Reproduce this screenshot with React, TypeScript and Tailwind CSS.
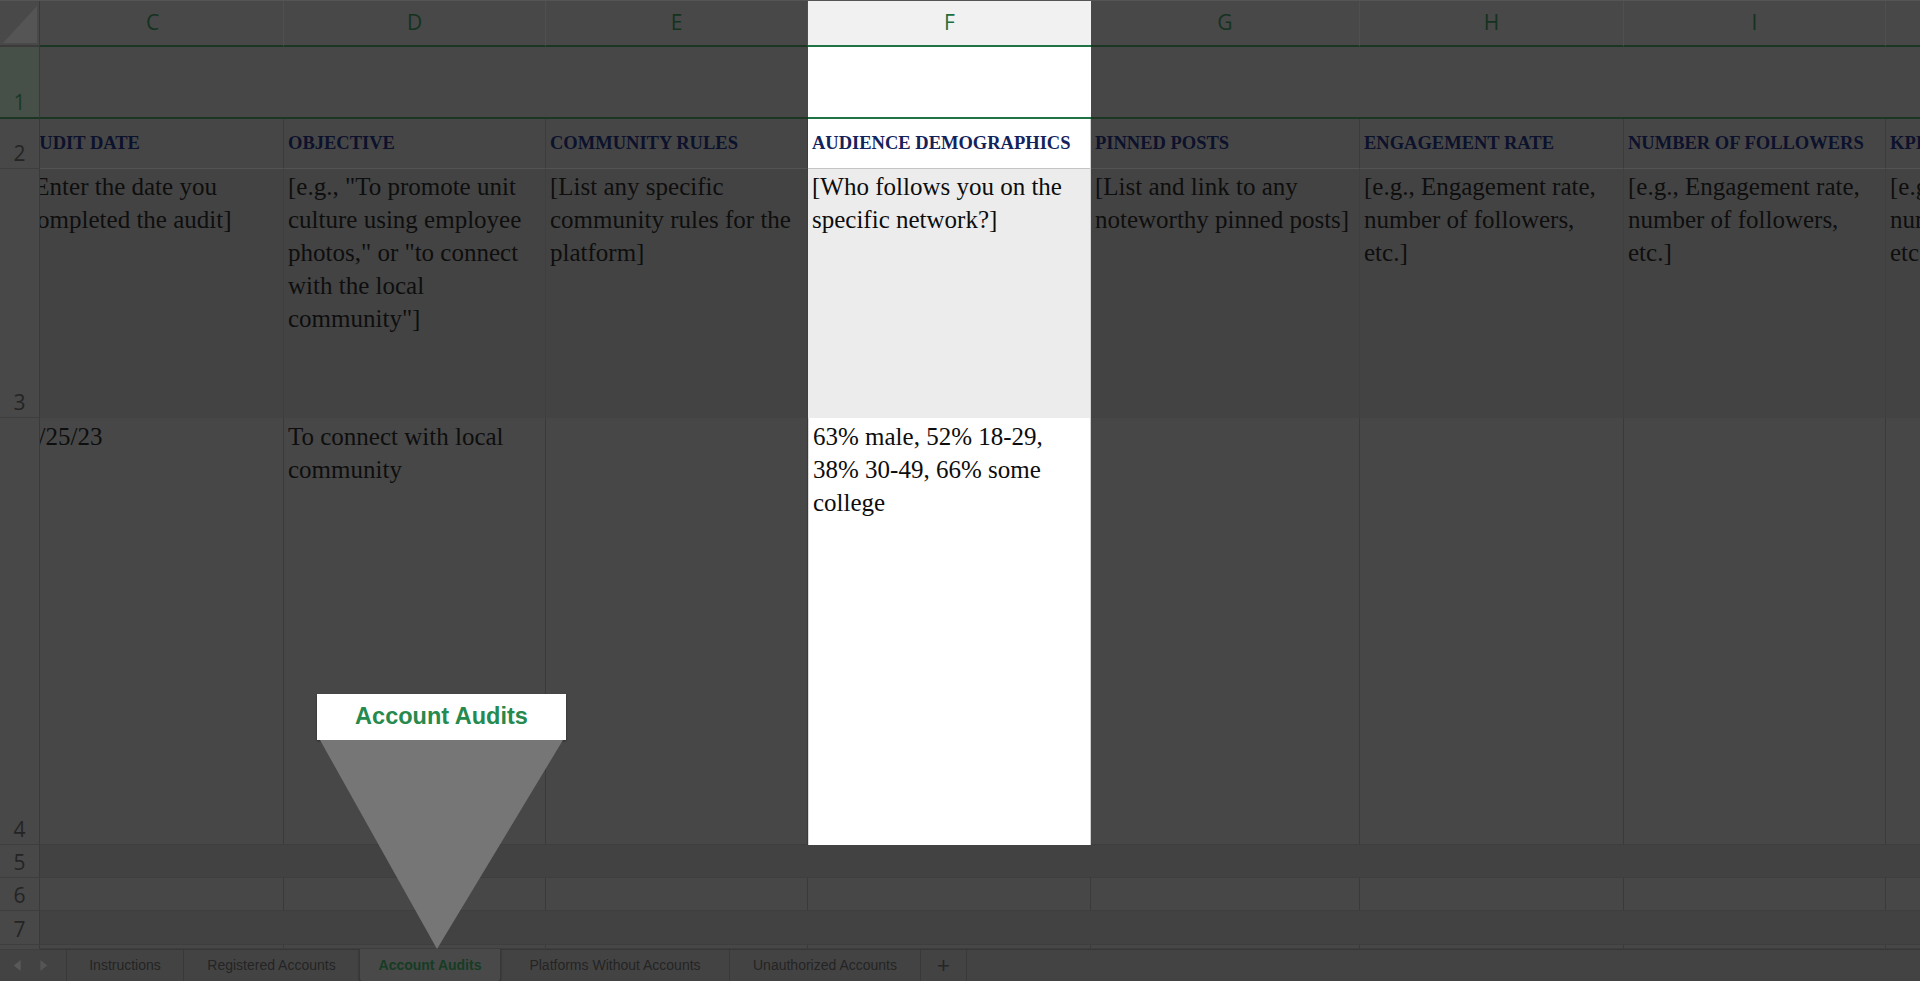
import React from 'react';

type Col = {
  id: string;
  w: string;
  head: string;
  note: string;
  entry: string;
  spot?: boolean;
};

const cols: Col[] = [
  { id: 'C', w: 'w-[262px]', head: 'AUDIT DATE', note: '[Enter the date you completed the audit]', entry: '4/25/23' },
  {
    id: 'D',
    w: 'w-[262px]',
    head: 'OBJECTIVE',
    note: '[e.g., "To promote unit culture using employee photos," or "to connect with the local community"]',
    entry: 'To connect with local community',
  },
  { id: 'E', w: 'w-[262px]', head: 'COMMUNITY RULES', note: '[List any specific community rules for the platform]', entry: '' },
  {
    id: 'F',
    w: 'w-[283px]',
    head: 'AUDIENCE DEMOGRAPHICS',
    note: '[Who follows you on the specific network?]',
    entry: '63% male, 52% 18-29, 38% 30-49, 66% some college',
    spot: true,
  },
  { id: 'G', w: 'w-[269px]', head: 'PINNED POSTS', note: '[List and link to any noteworthy pinned posts]', entry: '' },
  { id: 'H', w: 'w-[264px]', head: 'ENGAGEMENT RATE', note: '[e.g., Engagement rate, number of followers, etc.]', entry: '' },
  { id: 'I', w: 'w-[262px]', head: 'NUMBER OF FOLLOWERS', note: '[e.g., Engagement rate, number of followers, etc.]', entry: '' },
  { id: 'J', w: 'w-[262px]', head: 'KPIs', note: '[e.g., Engagement rate, number of followers, etc.]', entry: '' },
];

const serif = "font-['Liberation_Serif','Times_New_Roman',serif]";
const sans = "font-['Liberation_Sans',Arial,sans-serif]";
const ui = "font-['Open_Sans','Liberation_Sans',sans-serif]";

const RowHead: React.FC<{ n?: string; active?: boolean; className?: string }> = ({ n, active, className = '' }) => (
  <div
    className={`w-[40px] shrink-0 flex items-end justify-center pb-[4px] border-r border-[#3a3a3a] text-[21px] leading-none ${ui} ${
      active ? 'bg-[#465049] text-[#1b3a25]' : 'bg-[#484848] text-[#242424]'
    } ${className}`}
  >
    {n}
  </div>
);

// clipped strip of cells, column C is scrolled partly out of view
const Strip: React.FC<{ children: React.ReactNode }> = ({ children }) => (
  <div className="flex-1 overflow-hidden">
    <div className="flex h-full -ml-[18px]">{children}</div>
  </div>
);

const Band: React.FC<{ n: string; h: string; bg: string; lines?: boolean }> = ({ n, h, bg, lines }) => (
  <div className={`flex ${h}`}>
    <RowHead n={n} className="border-b border-b-[#3e3e3e]" />
    <Strip>
      {cols.map((c) => (
        <div
          key={c.id}
          className={`${c.w} shrink-0 ${bg} border-b border-b-[#3e3e3e] ${lines ? 'border-r border-r-[#3a3a3a]' : ''}`}
        />
      ))}
    </Strip>
  </div>
);

export default function App() {
  return (
    <div className="relative w-[1920px] h-[981px] overflow-hidden bg-[#444444]">
      {/* column letters */}
      <div className="flex h-[47px] border-t border-[#555555]">
        <div className="w-[40px] shrink-0 bg-[#494949] border-r border-[#3a3a3a] border-b-2 border-b-[#3b3b3b]">
          <svg width="40" height="44" viewBox="0 0 40 44">
            <polygon points="37,5 37,42 3,42" fill="#555555" />
          </svg>
        </div>
        <Strip>
          {cols.map((c) => (
            <div
              key={c.id}
              className={`${c.w} shrink-0 flex items-center justify-center border-b-2 text-[21px] ${ui} ${
                c.spot
                  ? 'bg-[#f1f1f1] text-[#1f6e3d] border-b-[#217346]'
                  : 'bg-[#484848] text-[#143220] border-b-[#1b3622] border-r border-r-[#4f4f4f]'
              }`}
            >
              {c.id}
            </div>
          ))}
        </Strip>
      </div>

      {/* row 1 */}
      <div className="flex h-[72px]">
        <RowHead n="1" active className="border-b-2 border-b-[#1b3622]" />
        <Strip>
          {cols.map((c) => (
            <div
              key={c.id}
              className={`${c.w} shrink-0 border-b-2 ${
                c.spot ? 'bg-white border-b-[#217346]' : 'bg-[#474747] border-b-[#1b3622]'
              }`}
            />
          ))}
        </Strip>
      </div>

      {/* row 2 headings */}
      <div className="flex h-[50px]">
        <RowHead n="2" className="border-b border-b-[#3e3e3e]" />
        <Strip>
          {cols.map((c) => (
            <div
              key={c.id}
              className={`${c.w} shrink-0 flex items-center px-[4px] overflow-hidden whitespace-nowrap font-bold text-[18.5px] ${serif} ${
                c.spot
                  ? 'bg-white text-[#13235c] border-b border-b-[#c4c4c4] border-r border-r-[#d2d2d2]'
                  : 'bg-[#464646] text-[#0c112c] border-b border-b-[#535353] border-r border-r-[#3c3c3c]'
              }`}
            >
              {c.head}
            </div>
          ))}
        </Strip>
      </div>

      {/* row 3 guidance */}
      <div className="flex h-[249px]">
        <RowHead n="3" className="border-b border-b-[#3e3e3e]" />
        <Strip>
          {cols.map((c) => (
            <div
              key={c.id}
              className={`${c.w} shrink-0 px-[4px] pt-[1px] overflow-hidden text-[25px] leading-[33px] ${serif} ${
                c.spot
                  ? 'bg-[#ececec] text-[#0d0d0d] border-r border-r-[#d2d2d2]'
                  : 'bg-[#434343] text-[#0e0e0e] border-r border-r-[#3f3f3f]'
              }`}
            >
              {c.note}
            </div>
          ))}
        </Strip>
      </div>

      {/* row 4 entry */}
      <div className="flex h-[427px]">
        <RowHead n="4" className="border-b border-b-[#3e3e3e]" />
        <Strip>
          {cols.map((c) => (
            <div
              key={c.id}
              className={`${c.w} shrink-0 px-[4px] pt-[2px] overflow-hidden text-[25px] leading-[33px] ${serif} ${
                c.spot
                  ? 'bg-white text-[#0d0d0d] border-l border-l-[#d9d9d9] border-r border-r-[#cfcfcf]'
                  : 'bg-[#474747] text-[#0e0e0e] border-r border-r-[#3a3a3a] border-b border-b-[#3e3e3e]'
              }`}
            >
              {c.entry}
            </div>
          ))}
        </Strip>
      </div>

      <Band n="5" h="h-[33px]" bg="bg-[#424242]" />
      <Band n="6" h="h-[33px]" bg="bg-[#474747]" lines />
      <Band n="7" h="h-[34px]" bg="bg-[#424242]" />
      <Band n="" h="h-[4px]" bg="bg-[#474747]" lines />

      {/* sheet tabs */}
      <div className={`flex h-[32px] border-t border-[#373737] bg-[#434343] text-[14px] text-[#242424] ${sans}`}>
        <div className="w-[67px] shrink-0 flex items-center border-r border-[#393939]">
          <svg width="67" height="31" viewBox="0 0 67 31">
            <polygon points="21,10 21,21 14,15.5" fill="#595959" />
            <polygon points="41,10 41,21 48,15.5" fill="#555555" />
          </svg>
        </div>
        <div className="w-[117px] shrink-0 flex items-center justify-center border-r border-[#393939]">Instructions</div>
        <div className="w-[175px] shrink-0 flex items-center justify-center">Registered Accounts</div>
        <div className="w-[142px] shrink-0 -mt-px flex items-center justify-center bg-[#494949] border-x border-[#373737] rounded-b-[3px] shadow-[0_1px_2px_rgba(0,0,0,0.35)] font-bold text-[#163c24]">
          Account Audits
        </div>
        <div className="w-[229px] shrink-0 flex items-center justify-center border-r border-[#393939]">Platforms Without Accounts</div>
        <div className="w-[191px] shrink-0 flex items-center justify-center border-r border-[#393939]">Unauthorized Accounts</div>
        <div className="w-[46px] shrink-0 flex items-center justify-center border-r border-[#393939] text-[22px] leading-none text-[#262626]">
          +
        </div>
        <div className="flex-1" />
      </div>

      {/* callout pointing at the active tab */}
      <div className="absolute left-[317px] top-[694px] w-[249px]">
        <div className={`h-[46px] flex items-center justify-center bg-white shadow-[0_1px_2px_rgba(0,0,0,0.4)] text-[23.5px] font-bold text-[#26894d] ${sans}`}>
          Account Audits
        </div>
        <svg width="249" height="209" viewBox="0 0 249 209" className="block">
          <polygon points="3,0 246,0 120,209" fill="#767676" />
        </svg>
      </div>
    </div>
  );
}
